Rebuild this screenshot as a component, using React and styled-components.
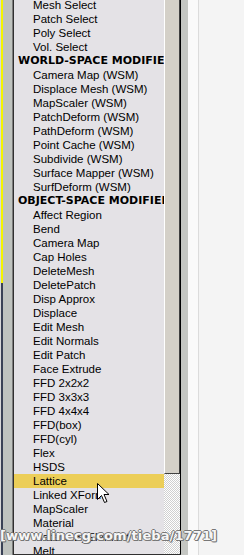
import React from "react";
import styled, { createGlobalStyle } from "styled-components";

const Global = createGlobalStyle`
  html, body { margin: 0; padding: 0; background: #f4f4f4; overflow: hidden; }
  #root { width: 244px; height: 555px; }
`;

const Frame = styled.div`
  position: relative;
  display: flex;
  width: 244px;
  height: 555px;
  overflow: hidden;
  background: #f4f4f4;
`;

const Strip = styled.div`
  flex: 0 0 ${(p) => p.$w}px;
  height: 100%;
  background: ${(p) => p.$bg};
`;

const DropDown = styled.div`
  flex: 0 0 166px;
  display: flex;
  height: 554px;
  border-bottom: 1px solid #303030;
`;

const List = styled.div`
  flex: 0 0 150px;
  background: #e4e2e6;
  overflow: hidden;
  display: flex;
  flex-direction: column;
`;

const Rows = styled.div`
  margin-top: -2px;
  display: flex;
  flex-direction: column;
`;

const Row = styled.div`
  flex: 0 0 14px;
  height: 14px;
  line-height: 14px;
  white-space: nowrap;
  overflow: hidden;
  color: #000;
  background: ${(p) => (p.$active ? "#ecce58" : "transparent")};
  padding-left: ${(p) => (p.$header ? 4 : 19)}px;
  font-family: ${(p) =>
    p.$header ? '"DejaVu Sans", sans-serif' : '"Liberation Sans", Arial, sans-serif'};
  font-weight: ${(p) => (p.$header ? 700 : 400)};
  font-size: ${(p) => (p.$header ? 11 : 11.5)}px;
`;

const Scroll = styled.div`
  flex: 0 0 16px;
  display: flex;
  flex-direction: column;
  border-right: 1px solid #000;
  background-color: #e8e8e8;
  background-image: repeating-conic-gradient(#ffffff 0 25%, #d0d0d0 0 50%);
  background-size: 2px 2px;
`;

const Thumb = styled.div`
  flex: 0 0 474px;
  box-sizing: border-box;
  background: #d4d0c8;
  border-left: 1px solid #ffffff;
  border-right: 1px solid #404040;
  border-bottom: 1px solid #404040;
`;

const Watermark = styled.div`
  position: absolute;
  left: 0;
  top: 528px;
  font-family: "DejaVu Sans", sans-serif;
  font-weight: 700;
  font-size: 13px;
  letter-spacing: 0.1px;
  color: #f6f6f6;
  white-space: nowrap;
  text-shadow: 1px 0 0 #777, -1px 0 0 #777, 0 1px 0 #777, 0 -1px 0 #777, 1px 1px 0 #777;
`;

const Cursor = styled.svg`
  position: absolute;
  left: 97px;
  top: 483px;
`;

const items = [
  ["Mesh Select"],
  ["Patch Select"],
  ["Poly Select"],
  ["Vol. Select"],
  ["WORLD-SPACE MODIFIERS", "h"],
  ["Camera Map (WSM)"],
  ["Displace Mesh (WSM)"],
  ["MapScaler (WSM)"],
  ["PatchDeform (WSM)"],
  ["PathDeform (WSM)"],
  ["Point Cache (WSM)"],
  ["Subdivide (WSM)"],
  ["Surface Mapper (WSM)"],
  ["SurfDeform (WSM)"],
  ["OBJECT-SPACE MODIFIERS", "h"],
  ["Affect Region"],
  ["Bend"],
  ["Camera Map"],
  ["Cap Holes"],
  ["DeleteMesh"],
  ["DeletePatch"],
  ["Disp Approx"],
  ["Displace"],
  ["Edit Mesh"],
  ["Edit Normals"],
  ["Edit Patch"],
  ["Face Extrude"],
  ["FFD 2x2x2"],
  ["FFD 3x3x3"],
  ["FFD 4x4x4"],
  ["FFD(box)"],
  ["FFD(cyl)"],
  ["Flex"],
  ["HSDS"],
  ["Lattice", "a"],
  ["Linked XForm"],
  ["MapScaler"],
  ["Material"],
  ["MaterialByElement"],
  ["Melt"],
];

export default function App() {
  return (
    <>
      <Global />
      <Frame>
        <Strip $w={1} $bg="#d8d8d8" />
        <Strip $w={2} $bg="linear-gradient(to bottom, #f4f400 0 283px, #3a4256 283px)" />
        <Strip $w={9} $bg="#bfc3bf" />
        <Strip $w={1} $bg="#7c7c7c" />
        <Strip $w={1} $bg="#303030" />
        <DropDown>
          <List>
            <Rows>
              {items.map(([t, k]) => (
                <Row key={t} $header={k === "h"} $active={k === "a"}>
                  {t}
                </Row>
              ))}
            </Rows>
          </List>
          <Scroll>
            <Thumb />
          </Scroll>
        </DropDown>
        <Strip $w={7} $bg="#c4c6c2" />
        <Strip $w={10} $bg="#fafafa" />
        <Strip $w={1} $bg="#dcdcdc" />
        <Strip $w={47} $bg="#f4f4f4" />
        <Watermark>[www.linecg.com/tieba/1771]</Watermark>
        <Cursor width="13" height="21" viewBox="0 0 13 21">
          <path
            d="M0.5 0.5 L0.5 16.5 L4.5 12.5 L7.5 19.5 L10 18.5 L7 11.5 L12 11.5 Z"
            fill="#fff"
            stroke="#000"
            strokeWidth="1"
          />
        </Cursor>
      </Frame>
    </>
  );
}
